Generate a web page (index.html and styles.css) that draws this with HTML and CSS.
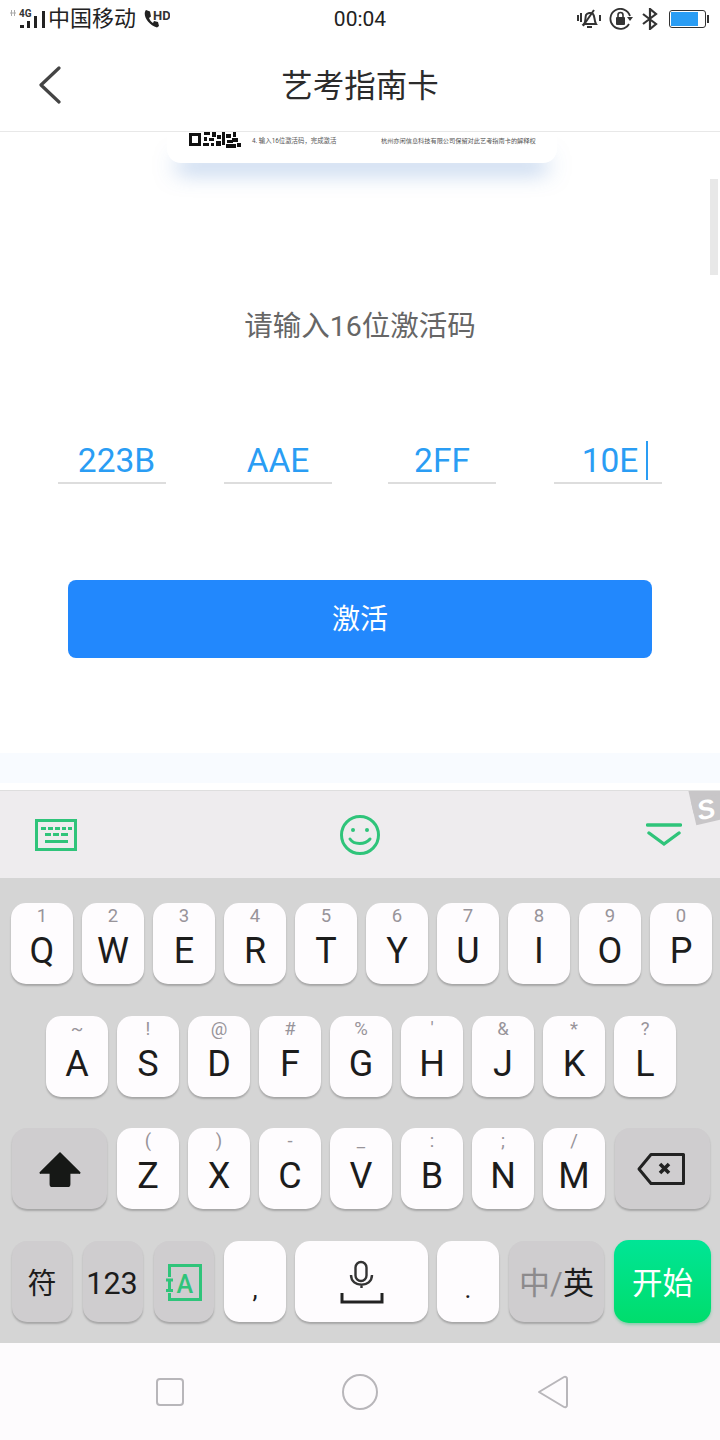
FILE: index.html
```html
<!DOCTYPE html>
<html lang="zh-CN">
<head>
    <meta charset="UTF-8">
    <meta name="viewport" content="width=device-width, initial-scale=1.0">
    <title>艺考指南卡</title>
    <link rel="stylesheet" href="styles.css">
</head>
<body>
    <div class="status">
        <div class="status-left">
            <svg class="signal" width="40" height="20" viewBox="0 0 40 20">
                <path d="M2 4h6M3.500 1v6M6.500 1v6" stroke="#aaa" stroke-width="1" fill="none"/>
                <text x="11" y="8" class="net">4G</text>
                <rect x="12" y="16" width="4" height="3" fill="#222"/>
                <rect x="19" y="12" width="3" height="7" fill="#222"/>
                <rect x="26" y="7" width="3" height="12" fill="#222"/>
                <rect x="34" y="2" width="3" height="17" fill="#222"/>
            </svg>
            <span class="carrier">中国移动</span>
            <svg class="call" width="27" height="20" viewBox="0 0 27 20">
                <path d="M3 1C-1 6 5 16 14 18.500l2-1.500-1-4-4-1-1 2c-2-1-3-3-4-5l2-1.500L7 2.500z" fill="#222"/>
                <text x="10" y="11" class="hd">HD</text>
            </svg>
        </div>
        <span class="time">00:04</span>
        <div class="status-right">
            <svg width="24" height="22" viewBox="0 0 24 22" fill="none" stroke="#333" stroke-width="2">
                <path d="M7 16c2-2 1-6 2-9 1-2 5-3 7-1 2 2 1 7 3 10z"/>
                <path d="M6 18L17 2M10 19h5M1 7v6M4 5v9M23 7v6"/>
            </svg>
            <svg width="24" height="22" viewBox="0 0 24 22" fill="none">
                <path d="M21 8a10 10 0 1 0-1 8" stroke="#333" stroke-width="1.800"/>
                <path d="M18 9h6l-3 4z" fill="#333"/>
                <rect x="7" y="9" width="9" height="8" rx="1" fill="#333"/>
                <path d="M9 9V7a2.500 2.500 0 0 1 5 0v2" stroke="#333" stroke-width="1.600"/>
            </svg>
            <svg width="18" height="22" viewBox="0 0 18 22" fill="none" stroke="#333" stroke-width="2.200">
                <path d="M2 6l13 10-6 5V1l6 5L2 16"/>
            </svg>
            <div class="battery"><div class="battery-fill"></div></div>
        </div>
    </div>

    <div class="header">
        <svg class="back" width="22" height="38" viewBox="0 0 22 38" fill="none" stroke="#444" stroke-width="3.200" stroke-linecap="round" stroke-linejoin="round">
            <path d="M20 2L2 19l18 17"/>
        </svg>
        <h1 class="title">艺考指南卡</h1>
    </div>

    <div class="page">
        <div class="card">
            <svg class="qr" width="52" height="17" viewBox="0 0 52 17">
                <path d="M0 1h12v13H0zM3 4v7h6V4z" fill-rule="evenodd" fill="#111"/>
                <path d="M15 0h6v3h-6zM23 0h4v5h-4zM15 5h3v4h-3zM20 6h5v3h-5zM14 11h6v3h-6zM22 11h3v3h-3zM28 3h4v4h-4zM27 9h5v5h-5zM33 0h3v13h-3zM37 2h5v4h-5zM38 8h6v3h-6zM44 0h3v5h-3zM43 6h6v4h-6zM37 12h10v4H37zM48 11h4v4h-4z" fill="#111"/>
            </svg>
            <span class="card-step">4. 输入16位激活码，完成激活</span>
            <span class="card-note">杭州亦闲信息科技有限公司保留对此艺考指南卡的解释权</span>
        </div>
        <div class="scroll-thumb"></div>

        <p class="prompt">请输入16位激活码</p>

        <div class="codes">
            <div class="code code-first">223B</div>
            <div class="code">AAE</div>
            <div class="code code-third">2FF</div>
            <div class="code code-last">10E<span class="caret"></span></div>
        </div>

        <button class="activate" type="button">激活</button>
        <div class="band"></div>
    </div>

    <div class="toolbar">
        <svg class="tool-left" width="42" height="32" viewBox="0 0 42 32">
            <rect x="1.500" y="1.500" width="39" height="29" fill="none" stroke="#2fc47a" stroke-width="3"/>
            <path d="M6 9.500h5M13 9.500h5M20 9.500h5M27 9.500h4M33 9.500h4M10 15.500h6M18 15.500h6M26 15.500h7M10 22.500h23" stroke="#2fc47a" stroke-width="3" fill="none"/>
        </svg>
        <svg width="40" height="40" viewBox="0 0 40 40" fill="none" stroke="#2fc47a" stroke-width="3">
            <circle cx="20" cy="20" r="18.500"/>
            <circle cx="13" cy="15" r="2" fill="#2fc47a" stroke="none"/>
            <circle cx="27" cy="15" r="2" fill="#2fc47a" stroke="none"/>
            <path d="M10 24c4 6 15 6 20 0" stroke-linecap="round"/>
        </svg>
        <svg class="tool-right" width="36" height="24" viewBox="0 0 36 24" fill="none" stroke="#2fc47a" stroke-width="3.400" stroke-linecap="round">
            <path d="M1.500 2h33M3 10l15 11 15-11"/>
        </svg>
        <div class="ime-mark"><span>S</span></div>
    </div>

    <div class="keyboard">
        <div class="row row-top">
            <div class="key"><small>1</small>Q</div>
            <div class="key"><small>2</small>W</div>
            <div class="key"><small>3</small>E</div>
            <div class="key"><small>4</small>R</div>
            <div class="key"><small>5</small>T</div>
            <div class="key"><small>6</small>Y</div>
            <div class="key"><small>7</small>U</div>
            <div class="key"><small>8</small>I</div>
            <div class="key"><small>9</small>O</div>
            <div class="key"><small>0</small>P</div>
        </div>
        <div class="row row-mid">
            <div class="key"><small>~</small>A</div>
            <div class="key"><small>!</small>S</div>
            <div class="key"><small>@</small>D</div>
            <div class="key"><small>#</small>F</div>
            <div class="key"><small>%</small>G</div>
            <div class="key"><small>'</small>H</div>
            <div class="key"><small>&amp;</small>J</div>
            <div class="key"><small>*</small>K</div>
            <div class="key"><small>?</small>L</div>
        </div>
        <div class="row row-low">
            <div class="key key-fn key-wide">
                <svg width="42" height="36" viewBox="0 0 44 38"><path d="M22 1L43 22a1 1 0 0 1-1 2H33v11a3 3 0 0 1-3 3H14a3 3 0 0 1-3-3V24H2a1 1 0 0 1-1-2z" fill="#161816"/></svg>
            </div>
            <div class="key"><small>(</small>Z</div>
            <div class="key"><small>)</small>X</div>
            <div class="key"><small>-</small>C</div>
            <div class="key"><small>_</small>V</div>
            <div class="key"><small>:</small>B</div>
            <div class="key"><small>;</small>N</div>
            <div class="key"><small>/</small>M</div>
            <div class="key key-fn key-del">
                <svg width="48" height="32" viewBox="0 0 48 32" fill="none" stroke="#222" stroke-width="3">
                    <path d="M46.500 1.500H14L2 16l12 14.500h32.500z" stroke-linejoin="round"/>
                    <path d="M23 11l9 9M32 11l-9 9" stroke-width="3.600"/>
                </svg>
            </div>
        </div>
        <div class="row row-bottom">
            <div class="key key-fn key-side key-text"><span class="fn-cjk">符</span></div>
            <div class="key key-fn key-side key-text"><span class="fn-num">123</span></div>
            <div class="key key-fn key-side">
                <svg width="38" height="40" viewBox="0 0 38 40" fill="none" stroke="#2fc47a" stroke-width="3">
                    <path d="M4.500 15V3.500h31v34h-31V31M4.500 18v10M1 18h7M1 28.500h7"/>
                    <text x="11.500" y="31" class="ime-a">A</text>
                </svg>
            </div>
            <div class="key key-text key-punct"><span>,</span></div>
            <div class="key key-text key-space">
                <svg width="44" height="44" viewBox="0 0 44 44" fill="none" stroke="#333" stroke-width="2.400">
                    <rect x="15.500" y="2" width="11" height="19" rx="5.500"/>
                    <path d="M11 15c0 13 21 13 21 0M21.500 25v3"/>
                    <path d="M2 33v9h40v-9" stroke="#222" stroke-width="3"/>
                </svg>
            </div>
            <div class="key key-text key-punct"><span>.</span></div>
            <div class="key key-fn key-lang key-text"><span class="lang-off">中/</span><span>英</span></div>
            <div class="key key-go key-text">开始</div>
        </div>
    </div>

    <div class="navbar">
        <svg width="30" height="30" viewBox="0 0 30 30"><rect x="2" y="2" width="26" height="26" rx="3" fill="none" stroke="#b8b6ba" stroke-width="2"/></svg>
        <svg class="nav-home" width="36" height="36" viewBox="0 0 36 36"><circle cx="18" cy="18" r="17" fill="none" stroke="#b8b6ba" stroke-width="2"/></svg>
        <svg width="32" height="34" viewBox="0 0 32 34"><path d="M2 17L27 2a2 2 0 0 1 3 2v26a2 2 0 0 1-3 2z" fill="none" stroke="#b8b6ba" stroke-width="2" stroke-linejoin="round"/></svg>
    </div>
</body>
</html>
```

FILE: styles.css
```css
* {
    box-sizing: border-box;
}
body {
    margin: 0;
    width: 720px;
    height: 1440px;
    overflow: hidden;
    background-color: #fff;
    font-family: Roboto, "Noto Sans CJK SC", sans-serif;
    color: #222;
}

/* status bar */
.status {
    height: 44px;
    display: grid;
    grid-template-columns: 1fr auto 1fr;
    align-items: center;
    padding: 0 14px 6px 8px;
}
.status-left {
    display: flex;
    align-items: center;
}
.net, .hd {
    font-family: Roboto, sans-serif;
    font-weight: 700;
    fill: #333;
}
.net {
    font-size: 10px;
}
.hd {
    font-size: 13px;
}
.carrier {
    font-size: 22px;
    line-height: 30px;
}
.call {
    margin-left: 7px;
}
.time {
    margin-left: 6px;
    font-size: 21px;
    line-height: 30px;
}
.status-right {
    display: flex;
    justify-content: flex-end;
    align-items: center;
    gap: 8px;
}
.battery {
    width: 37px;
    height: 18px;
    padding: 1px;
    margin-left: 2px;
    border: 1px solid #333;
    border-radius: 3px;
    position: relative;
}
.battery::after {
    content: "";
    position: absolute;
    right: -4px;
    top: 4px;
    width: 2px;
    height: 8px;
    background-color: #333;
}
.battery-fill {
    width: 27px;
    height: 100%;
    background-color: #2a9df4;
}

/* header */
.header {
    height: 88px;
    padding-bottom: 10px;
    position: relative;
    display: flex;
    align-items: center;
    justify-content: center;
    border-bottom: 1px solid #e8e8e8;
}
.back {
    position: absolute;
    left: 39px;
    top: 22px;
}
.title {
    margin: 0;
    font-size: 31.500px;
    font-weight: 400;
    color: #2b2b2b;
}

/* page content */
.page {
    height: 658px;
    overflow: hidden;
    position: relative;
}
.card {
    width: 390px;
    height: 31px;
    margin-left: 167px;
    padding-left: 22px;
    display: flex;
    align-items: flex-start;
    background-color: #fff;
    border-radius: 0 0 14px 14px;
    box-shadow: 0 18px 22px -10px rgba(60, 120, 200, 0.5);
}
.qr {
    flex: none;
}
.card-step, .card-note {
    font-size: 6.200px;
    line-height: 18px;
    color: #555;
    white-space: nowrap;
}
.card-step {
    margin-left: 11px;
    width: 129px;
    font-size: 6.400px;
}
.scroll-thumb {
    position: absolute;
    right: 2px;
    top: 47px;
    width: 8px;
    height: 96px;
    background-color: #e8e8e8;
}
.prompt {
    margin: 0;
    padding-top: 143px;
    text-align: center;
    font-size: 28.500px;
    line-height: 42px;
    color: #666;
}
.codes {
    margin-top: 88px;
    padding: 0 58px;
    display: flex;
}
.code {
    width: 108px;
    height: 48px;
    margin-left: 58px;
    position: relative;
    text-align: center;
    font-size: 33.500px;
    line-height: 50px;
    color: #2a9df4;
    border-bottom: 2px solid #ddd;
}
.code-first {
    margin-left: 0;
    padding-left: 9px;
}
.code-third {
    margin-left: 56px;
}
.code-last {
    padding-left: 4px;
}
.caret {
    position: absolute;
    left: 92px;
    top: 5px;
    width: 2px;
    height: 39px;
    background-color: #2a9df4;
}
.activate {
    display: block;
    width: 584px;
    height: 78px;
    margin: 96px 0 0 68px;
    padding-bottom: 5px;
    border: none;
    border-radius: 8px;
    background-color: #2288fd;
    color: #fff;
    font-family: inherit;
    font-size: 28px;
}
.band {
    height: 30px;
    margin-top: 95px;
    background-color: #f8fbff;
}

/* keyboard */
.toolbar {
    height: 88px;
    padding: 0 35px;
    position: relative;
    overflow: hidden;
    display: grid;
    grid-template-columns: 1fr auto 1fr;
    align-items: center;
    background-color: #eeecee;
    border-top: 1px solid #dedede;
}
.tool-right {
    justify-self: end;
    margin-right: 3px;
}
.ime-mark {
    position: absolute;
    left: 693px;
    top: 5px;
    width: 40px;
    height: 25px;
    background-color: #c8c6c8;
    box-shadow: 0 -12px 0 #c8c6c8;
    transform: rotate(-13deg);
}
.ime-mark span {
    display: block;
    width: 24px;
    padding-left: 4px;
    font-family: "Liberation Sans", sans-serif;
    font-size: 27px;
    line-height: 25px;
    font-weight: 700;
    font-style: italic;
    color: #fff;
}
.keyboard {
    height: 465px;
    padding-top: 25px;
    background-color: #d5d5d5;
}
.row {
    display: flex;
    gap: 9px;
    height: 81px;
    margin-bottom: 32px;
}
.row-top {
    padding-left: 11px;
}
.row-mid {
    padding-left: 46px;
    margin-bottom: 31px;
}
.row-low {
    padding-left: 12px;
}
.row-bottom {
    padding-left: 12px;
}
.key {
    width: 62px;
    height: 81px;
    padding-top: 3px;
    border-radius: 15px;
    background-color: #fefcfe;
    box-shadow: 0 2px 2px rgba(0, 0, 0, 0.22);
    display: flex;
    flex-direction: column;
    align-items: center;
    font-size: 36px;
    line-height: 50px;
    color: #1c1c1c;
}
.key small {
    height: 20px;
    font-size: 18.500px;
    line-height: 20px;
    color: #98949a;
}
.key-fn {
    background-color: #cfcdcf;
    padding-top: 0;
    justify-content: center;
}
.key-wide {
    width: 95px;
    margin-right: 1px;
}
.key-del {
    width: 95px;
    margin-left: 1px;
    padding-right: 4px;
}
.key-text {
    padding-top: 4px;
    flex-direction: row;
    justify-content: center;
    align-items: center;
}
.key-side {
    width: 60px;
    margin-right: 2px;
}
.key-side:nth-child(3) {
    margin-right: 1px;
}
.fn-cjk {
    font-size: 29px;
}
.fn-num {
    font-size: 30.500px;
    margin-right: 2px;
}
.ime-a {
    font-family: Roboto, sans-serif;
    font-size: 25px;
    font-weight: 500;
    fill: #2fc47a;
    stroke: none;
}
.key-punct {
    font-size: 26px;
}
.key-punct span {
    padding-top: 10px;
}
.key-space {
    width: 133px;
    padding-top: 0;
}
.key-lang {
    width: 95px;
    margin-left: 1px;
    font-size: 31px;
}
.lang-off {
    color: #8c8a8c;
}
.key-go {
    width: 97px;
    height: 83px;
    margin: -1px 0 0 1px;
    background-image: linear-gradient(#00e596, #00dd6c);
    box-shadow: 0 2px 3px rgba(0, 190, 100, 0.35);
    color: #fff;
    font-size: 30.500px;
}

/* nav bar */
.navbar {
    height: 97px;
    padding: 0 151px 0 155px;
    display: flex;
    justify-content: space-between;
    align-items: center;
    background-color: #fdfbfd;
}
.nav-home {
    margin-right: 2px;
}
```
